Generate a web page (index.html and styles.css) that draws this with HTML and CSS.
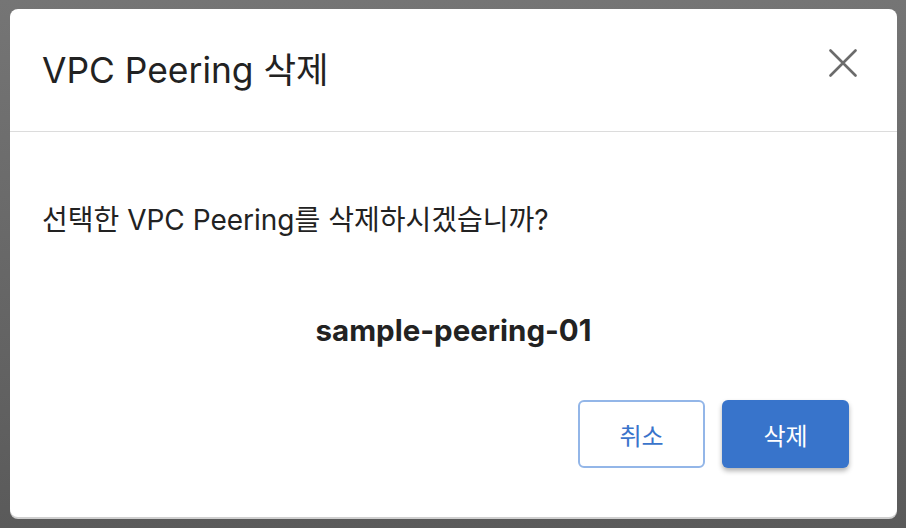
FILE: index.html
```html
<!DOCTYPE html>
<html lang="ko">
<head>
<meta charset="utf-8">
<link rel="stylesheet" href="styles.css">
</head>
<body>
<div class="backdrop">
  <div class="modal">
    <div class="modal-header">
      <h1 class="modal-title">VPC Peering 삭제</h1>
      <button class="close-btn" aria-label="닫기">
        <svg width="28" height="28" viewBox="0 0 28 28"><path d="M1.5 1.5 L26.5 26.5 M26.5 1.5 L1.5 26.5" stroke="#6b6b6b" stroke-width="2.6" stroke-linecap="round"/></svg>
      </button>
    </div>
    <div class="modal-body">
      <p class="message">선택한 VPC Peering를 삭제하시겠습니까?</p>
      <p class="target">sample-peering-01</p>
      <div class="actions">
        <button class="btn btn-outline">취소</button>
        <button class="btn btn-primary">삭제</button>
      </div>
    </div>
  </div>
</div>
</body>
</html>
```

FILE: styles.css
```css
html, body {
  margin: 0;
  padding: 0;
  height: 100%;
}
body {
  font-family: Inter, "Noto Sans CJK KR", sans-serif;
  color: #222;
  background: linear-gradient(#757575, #5a5a5a);
}
.backdrop {
  padding: 9px 9px 0 10px;
  height: 528px;
  box-sizing: border-box;
}
.modal {
  width: 887px;
  height: 508px;
  background: #fff;
  border-radius: 8px;
  box-shadow: 0 2px 0 #cfcfcf;
  display: flex;
  flex-direction: column;
}
.modal-header {
  height: 123px;
  box-sizing: border-box;
  border-bottom: 1px solid #dcdcdc;
  display: flex;
  align-items: center;
  justify-content: space-between;
  padding: 2px 40px 0 32px;
}
.modal-title {
  margin: 0;
  font-size: 35.4px;
  font-weight: 400;
  color: #222;
  line-height: 44px;
}
.close-btn {
  border: 0;
  background: none;
  padding: 0;
  width: 28px;
  height: 28px;
  margin-top: -17px;
  display: flex;
}
.modal-body {
  flex: 1;
  padding: 0 48px 0 32px;
  display: flex;
  flex-direction: column;
}
.message {
  margin: 69px 0 0;
  font-size: 28px;
  line-height: 38px;
}
.target {
  margin: 72px 0 0 16px;
  text-align: center;
  font-size: 29.5px;
  font-weight: 700;
  line-height: 38px;
}
.actions {
  margin-top: 51px;
  display: flex;
  justify-content: flex-end;
  gap: 17px;
}
.btn {
  width: 127px;
  height: 68px;
  border-radius: 6px;
  font-family: inherit;
  font-size: 24px;
  font-weight: 400;
  box-sizing: border-box;
}
.btn-outline {
  background: #fff;
  border: 2px solid #93b6e8;
  color: #3a74cb;
}
.btn-primary {
  background: #3874cb;
  border: 0;
  color: #fff;
  box-shadow: 0 3px 5px rgba(0,0,0,0.3);
}
```
